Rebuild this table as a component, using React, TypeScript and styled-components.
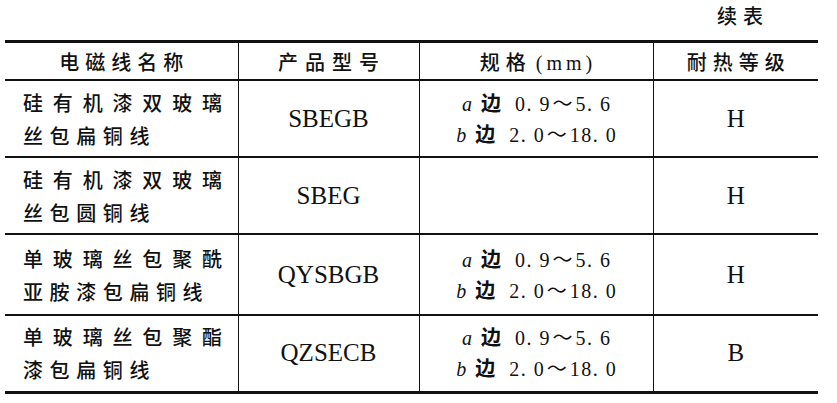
import React from 'react';
import styled, { createGlobalStyle } from 'styled-components';

const CJK = `"Noto Sans CJK SC", "Noto Sans", sans-serif`;
const SERIF = `"Liberation Serif", "Noto Sans CJK SC", serif`;
const INK = '#111';

const GlobalStyle = createGlobalStyle`
  html, body { margin: 0; padding: 0; background: #fff; }
  body { font-family: ${CJK}; color: ${INK}; }
`;

const WIDTHS = [233, 181, 234, 165];

const Page = styled.div`
  padding-left: 5px;
  width: 813px;
`;

const CaptionBar = styled.div`
  display: grid;
  grid-template-columns: ${WIDTHS.map((w) => `${w}px`).join(' ')};
  height: 40px;
`;

const Continued = styled.div`
  grid-column: 4;
  padding-left: 64px;
  font-size: 20px;
  line-height: 32px;
  letter-spacing: 6px;
  font-weight: 500;
`;

const Table = styled.table`
  width: 813px;
  table-layout: fixed;
  border-collapse: collapse;
  border-top: 3px solid ${INK};
  border-bottom: 3px solid ${INK};
`;

const Col = styled.col<{ $w: number }>`
  width: ${(p) => p.$w}px;
`;

const HeadCell = styled.th`
  height: 36px;
  padding: 0;
  font-size: 20px;
  font-weight: 500;
  text-align: center;
  vertical-align: middle;
  border-bottom: 2px solid ${INK};
  border-left: 1px solid ${INK};
  &:first-child { border-left: none; }
`;

const Tracked = styled.span<{ $ls: number }>`
  letter-spacing: ${(p) => p.$ls}px;
  margin-right: -${(p) => p.$ls}px;
`;

const Unit = styled.span`
  font-family: ${SERIF};
  font-size: 20px;
  font-weight: 400;
  letter-spacing: 4px;
  margin-left: 10px;
  margin-right: -4px;
`;

const Row = styled.tr<{ $h: number }>`
  height: ${(p) => p.$h}px;
`;

const Cell = styled.td`
  padding: 0;
  vertical-align: middle;
  text-align: center;
  border-bottom: 2px solid ${INK};
  border-left: 1px solid ${INK};
  &:first-child { border-left: none; }
`;

const NameCell = styled(Cell)`
  padding-left: 18px;
  text-align: left;
  font-weight: 500;
`;

const NameFirst = styled.div`
  width: 199px;
  font-size: 20px;
  line-height: 33px;
  text-align: justify;
  text-align-last: justify;
`;

const NameRest = styled.div`
  font-size: 20px;
  line-height: 33px;
  letter-spacing: 6.6px;
`;

const Code = styled.span`
  font-family: ${SERIF};
  font-size: 25px;
`;

const SpecLine = styled.div`
  font-family: ${SERIF};
  font-size: 20px;
  line-height: 30px;
  text-align: center;
`;

const Var = styled.span`
  font-style: italic;
  margin-right: 9px;
`;

const Edge = styled.span`
  font-family: ${CJK};
  font-size: 20px;
  font-weight: 700;
  margin-right: 14px;
`;

const Num = styled.span`
  letter-spacing: 1.5px;
  margin-right: -1.5px;
`;

const Tilde = styled.span`
  font-family: ${CJK};
  font-size: 20px;
  letter-spacing: 0;
  margin: 0 3px;
`;

type Spec = { lo: string; hi: string };
type Item = {
  name: [string, string];
  code: string;
  spec?: [Spec, Spec];
  grade: string;
  h: number;
};

const FLAT: [Spec, Spec] = [
  { lo: '0. 9', hi: '5. 6' },
  { lo: '2. 0', hi: '18. 0' },
];

const rows: Item[] = [
  { name: ['硅有机漆双玻璃', '丝包扁铜线'], code: 'SBEGB', spec: FLAT, grade: 'H', h: 77 },
  { name: ['硅有机漆双玻璃', '丝包圆铜线'], code: 'SBEG', grade: 'H', h: 77 },
  { name: ['单玻璃丝包聚酰', '亚胺漆包扁铜线'], code: 'QYSBGB', spec: FLAT, grade: 'H', h: 81 },
  { name: ['单玻璃丝包聚酯', '漆包扁铜线'], code: 'QZSECB', spec: FLAT, grade: 'B', h: 77 },
];

function SpecText({ v, s }: { v: string; s: Spec }) {
  return (
    <SpecLine>
      <Var>{v}</Var>
      <Edge>边</Edge>
      <Num>{s.lo}</Num>
      <Tilde>～</Tilde>
      <Num>{s.hi}</Num>
    </SpecLine>
  );
}

export default function App() {
  return (
    <Page>
      <GlobalStyle />
      <CaptionBar>
        <Continued>续表</Continued>
      </CaptionBar>
      <Table>
        <colgroup>
          {WIDTHS.map((w, i) => (
            <Col key={i} $w={w} />
          ))}
        </colgroup>
        <thead>
          <tr>
            <HeadCell>
              <Tracked $ls={6}>电磁线名称</Tracked>
            </HeadCell>
            <HeadCell>
              <Tracked $ls={7}>产品型号</Tracked>
            </HeadCell>
            <HeadCell>
              <Tracked $ls={6}>规格</Tracked>
              <Unit>(mm)</Unit>
            </HeadCell>
            <HeadCell>
              <Tracked $ls={6}>耐热等级</Tracked>
            </HeadCell>
          </tr>
        </thead>
        <tbody>
          {rows.map((r) => (
            <Row key={r.code} $h={r.h}>
              <NameCell>
                <NameFirst>{r.name[0]}</NameFirst>
                <NameRest>{r.name[1]}</NameRest>
              </NameCell>
              <Cell>
                <Code>{r.code}</Code>
              </Cell>
              <Cell>
                {r.spec && (
                  <>
                    <SpecText v="a" s={r.spec[0]} />
                    <SpecText v="b" s={r.spec[1]} />
                  </>
                )}
              </Cell>
              <Cell>
                <Code>{r.grade}</Code>
              </Cell>
            </Row>
          ))}
        </tbody>
      </Table>
    </Page>
  );
}
